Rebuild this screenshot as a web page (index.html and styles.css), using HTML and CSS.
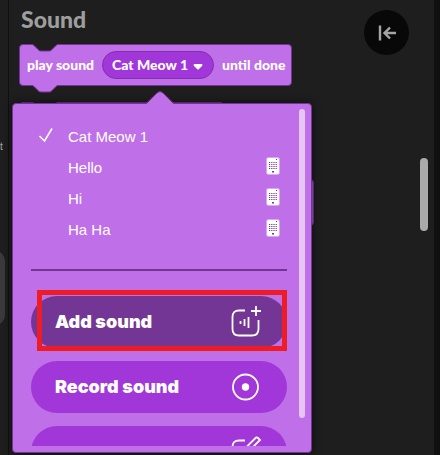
FILE: index.html
```html
<!DOCTYPE html>
<html lang="en">
<head>
<meta charset="utf-8">
<title>Sound</title>
<link rel="stylesheet" href="styles.css">
</head>
<body>
<svg class="defs" aria-hidden="true">
  <symbol id="device" viewBox="0 0 14 18">
    <rect x="0.5" y="0.5" width="13" height="17" rx="2" fill="#fff" stroke="#d9a9ef"/>
    <path d="M3 5.500h8M3 7.500h8M3 9.500h8M3 11.500h8" stroke="#743497" stroke-dasharray="1.200 1" stroke-width="1.200"/>
    <path d="M10 2.500h1M6 14.500h2M6.500 15.500h1" stroke="#743497"/>
  </symbol>
  <symbol id="notch" viewBox="0 0 28 8">
    <path d="M0 0H1Q2 .5 3 1.500L7 5.500Q8 7 10 7H18Q20 7 21 5.500L25 1.500Q26 .5 27 0H28" stroke="#743497"/>
  </symbol>
</svg>
<div class="workspace">
  <aside class="categories"><span class="category-label">t</span><div class="category-tab"></div></aside>
  <main class="palette">
    <h1>Sound</h1>
    <div class="block">
      <svg class="notch cut" aria-hidden="true"><use href="#notch"/></svg>
      <label for="sound">play sound</label>
      <span class="dropdown">
        <select id="sound"><option>Cat Meow 1</option><option>Hello</option><option>Hi</option><option>Ha Ha</option></select>
        <svg class="caret" viewBox="0 0 10 6" aria-hidden="true"><path d="M1 0H9Q10 1 9 2L6 5Q5 6 4 5L1 2Q0 1 1 0Z"/></svg>
      </span>
      <span>until done</span>
      <svg class="notch tab" aria-hidden="true"><use href="#notch"/></svg>
    </div>
    <div class="block second"><svg class="notch cut" aria-hidden="true"><use href="#notch"/></svg></div>
    <div class="block third"></div>
    <button class="collapse" aria-label="Collapse"><svg viewBox="0 0 18 16" aria-hidden="true"><path d="M2 .5V15.5M18 8H7M12 2.5L6.5 8L12 13.5"/></svg></button>
    <div class="palette-thumb"></div>

    <section class="popup">
      <svg class="pointer" viewBox="0 0 28 14" aria-hidden="true"><path d="M0 13.5L11 2Q14 -1 17 2L28 13.5Z" fill="#bf6fe7"/><path d="M0 12.5L11 2Q14 -1 17 2L28 12.5" fill="none" stroke="#743497"/></svg>
      <div class="scroller">
        <ul>
          <li><button class="item"><svg class="check" viewBox="0 0 16 16" aria-hidden="true"><path d="M1.5 9L6.5 14L14 1.5"/></svg><span>Cat Meow 1</span></button></li>
          <li><button class="item"><span>Hello</span><svg class="device" aria-hidden="true"><use href="#device"/></svg></button></li>
          <li><button class="item"><span>Hi</span><svg class="device" aria-hidden="true"><use href="#device"/></svg></button></li>
          <li><button class="item"><span>Ha Ha</span><svg class="device" aria-hidden="true"><use href="#device"/></svg></button></li>
        </ul>
        <hr>
        <div class="actions">
          <button class="action active"><span>Add sound</span>
            <svg viewBox="0 0 32 32" aria-hidden="true"><path d="M15 4.500H9Q2.500 4.500 2.500 11V23Q2.500 29.500 9 29.500H22Q28.500 29.500 28.500 23V14"/><path d="M26 0V10M21 5H31"/><path d="M10.500 15V18M14.500 13V20M18.500 11V22"/></svg></button>
          <button class="action"><span>Record sound</span>
            <svg viewBox="0 0 32 32" aria-hidden="true"><circle cx="15.500" cy="16" r="12.500"/><circle class="dot" cx="15.500" cy="16" r="3.700"/></svg></button>
          <button class="action" aria-label="Edit sound">
            <svg viewBox="0 0 32 32" aria-hidden="true"><path d="M15 4.500H9Q2.500 4.500 2.500 11V24Q2.500 30.500 9 30.500H22Q28.500 30.500 28.500 24V16"/><path d="M16 15L17.500 10L26 1.500Q27 1 28 2L30 4L21 13Z"/></svg></button>
        </div>
      </div>
      <div class="popup-thumb"></div>
      <div class="highlight"></div>
    </section>
  </main>
  <div class="edge"></div>
</div>
</body>
</html>
```
FILE: styles.css
```css
* { box-sizing: border-box; }
body { margin: 0; background: #1e1e1e; }
button, select { border: 0; padding: 0; margin: 0; background: none; color: inherit; font: inherit; }
svg { display: block; fill: none; }
.defs { position: absolute; width: 0; height: 0; }

.workspace { display: grid; grid-template-columns: 9px 1fr 6px; height: 100vh; overflow: hidden; }
.categories { position: relative; border-right: 1px solid #101010; overflow: hidden; }
.category-label { position: absolute; left: 0; top: 139px; color: #aaa; font: 10px/16px "Liberation Sans", sans-serif; }
.category-tab { position: absolute; left: -20px; top: 251px; width: 25px; height: 74px; border-radius: 10px; background: #3a3a3a; }
.edge { background: #101010; }

.palette { position: relative; padding: 5px 10px; color: #fff; font: 900 14px/16px Lato, sans-serif; }
h1 { margin: 0 0 11px; padding-left: 2px; color: #9e9e9e; font: 900 23px/28px Lato, sans-serif; }

.block { position: relative; display: flex; align-items: center; gap: 8px; width: fit-content; height: 42px; padding: 0 6px 0 7px; border: 1px solid #743497; border-radius: 4px; background: #bf6fe7; white-space: nowrap; }
.notch { position: absolute; left: 11px; width: 28px; height: 8px; }
.cut { top: -1px; fill: #1e1e1e; }
.tab { top: 40px; fill: #bf6fe7; }
.dropdown { position: relative; }
select { display: block; height: 28px; padding: 0 24px 0 9px; border: 1px solid #8430ac; border-radius: 14px; background: #a136d9; appearance: none; }
.caret { position: absolute; right: 11px; top: 13px; width: 10px; height: 6px; fill: #fff; }
.second { width: 205px; margin-top: 16px; }
.third { width: 295px; height: 47px; margin-top: 35px; background: #a45bc9; }

.collapse { position: absolute; right: 25px; top: 10px; display: grid; place-items: center; width: 45px; height: 45px; border-radius: 50%; background: #080808; }
.collapse svg { width: 18px; height: 16px; stroke: #a5a5a5; stroke-width: 2.4; }
.palette-thumb { position: absolute; right: 6px; top: 158px; width: 8px; height: 73px; border-radius: 4px; background: #aaa; }

.popup { position: absolute; left: 3px; top: 103px; bottom: 2px; width: 300px; padding: 17px 24px 6px 18px; border: 1px solid #743497; border-radius: 4px; background: #bf6fe7; box-shadow: 0 0 8px rgba(0, 0, 0, .6); }
.pointer { position: absolute; left: 133px; top: -13px; width: 28px; height: 14px; }
.scroller { height: 100%; overflow: hidden; }
ul { margin: 0; padding: 0; list-style: none; }
.item { position: relative; display: flex; align-items: center; justify-content: space-between; width: 100%; height: 31px; padding: 0 7px 0 37px; font: 15px/20px "Liberation Sans", Arial, sans-serif; }
.check { position: absolute; left: 7px; top: 6px; width: 16px; height: 16px; stroke: #fff; stroke-width: 1.6; }
.device { width: 14px; height: 18px; margin-bottom: 4px; }
hr { height: 2px; margin: 24px 0 25px; border: 0; background: #743497; }
.actions { display: grid; gap: 13px; }
.action { display: flex; align-items: center; justify-content: space-between; width: 100%; height: 52px; padding: 0 25px 0 24px; border-radius: 26px; background: #a136d9; font: 900 18px/20px Inter, "Liberation Sans", sans-serif; }
.action.active { background: #743694; }
.action svg { width: 32px; height: 32px; margin-left: auto; stroke: #fff; stroke-width: 1.8; }
.action .dot { fill: #fff; stroke: none; }
.popup-thumb { position: absolute; right: 6px; top: 5px; width: 6px; height: 309px; border-radius: 3px; background: #e7c6f5; }
.highlight { position: absolute; left: 24px; right: 24px; top: 186px; height: 61px; border: 5px solid #ee1c25; pointer-events: none; }
```
